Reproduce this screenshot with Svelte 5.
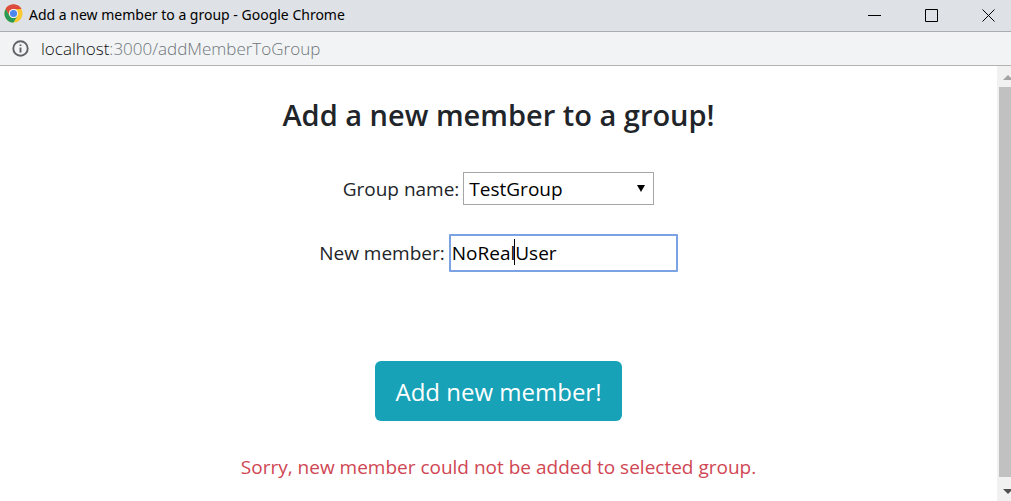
<script lang="ts">
  let group = $state('TestGroup');
  let member = $state('NoRealUser');
</script>

<div class="window">
  <header class="titlebar">
    <svg class="logo" width="19" height="19" viewBox="0 0 48 48" aria-hidden="true">
      <circle cx="24" cy="24" r="23" fill="#fbc934" />
      <path d="M4.1 12.5A23 23 0 0 1 43.9 12.5L24 13Z" fill="#dc4b3e" />
      <path d="M4.1 12.5A23 23 0 0 1 43.9 12.5H24A11.5 11.5 0 0 0 14 29.8Z" fill="#dc4b3e" />
      <path d="M4.1 12.5A23 23 0 0 0 24 47L34 29.8A11.5 11.5 0 0 1 14 29.8Z" fill="#279b57" />
      <circle cx="24" cy="24" r="11.5" fill="#f3f6fb" />
      <circle cx="24" cy="24" r="9" fill="#4a86ee" />
    </svg>
    <span class="title">Add a new member to a group - Google Chrome</span>
    <div class="controls">
      <button aria-label="Minimize">
        <svg width="13" height="13" viewBox="0 0 13 13"><path d="M0 6.5H13" /></svg>
      </button>
      <button aria-label="Maximize">
        <svg width="13" height="13" viewBox="0 0 13 13"><path d="M.5 .5H12.5V12.5H.5Z" /></svg>
      </button>
      <button aria-label="Close">
        <svg width="13" height="13" viewBox="0 0 13 13"><path d="M.5 .5L12.5 12.5M12.5 .5L.5 12.5" /></svg>
      </button>
    </div>
  </header>

  <div class="address">
    <svg width="17" height="17" viewBox="0 0 17 17" aria-hidden="true">
      <circle cx="8.5" cy="8.5" r="7.2" fill="none" stroke="#5f6368" stroke-width="1.9" />
      <path d="M8.5 7.5V12.5M8.5 4.4V6.1" stroke="#5f6368" stroke-width="1.9" />
    </svg>
    <span class="url"><span class="host">localhost</span>:3000/addMemberToGroup</span>
  </div>

  <div class="viewport">
    <main>
      <h1>Add a new member to a group!</h1>
      <form onsubmit={(e) => e.preventDefault()}>
        <div class="row group">
          <label for="group">Group name:</label>
          <span class="field">
            <select id="group" bind:value={group}>
              <option>TestGroup</option>
            </select>
            <svg class="arrow" width="8" height="7" viewBox="0 0 8 7" aria-hidden="true"><path d="M0 0H8L4 7Z" /></svg>
          </span>
        </div>
        <div class="row member">
          <label for="member">New member:</label>
          <span class="field">
            <input id="member" type="text" bind:value={member} />
            <span class="caret"></span>
          </span>
        </div>
        <button class="submit" type="submit">Add new member!</button>
      </form>
      <p class="error" role="alert">Sorry, new member could not be added to selected group.</p>
    </main>

    <div class="scrollbar" aria-hidden="true">
      <svg width="12" height="21" viewBox="0 0 12 21"><path d="M4 14L9 9L14 14Z" fill="#a3a3a3" /></svg>
      <div class="thumb"></div>
      <svg width="12" height="24" viewBox="0 0 12 24"><path d="M4 12H14L9 17Z" fill="#505050" /></svg>
    </div>
  </div>
</div>

<style>
  :global(body) {
    margin: 0;
    background: #fff;
  }

  .window {
    display: flex;
    flex-direction: column;
    height: 100vh;
    overflow: hidden;
    color: #212529;
    font-family: "Segoe UI", "Open Sans", "Noto Sans", sans-serif;
    font-size: 19px;
  }

  .window * {
    box-sizing: border-box;
  }

  .titlebar {
    display: flex;
    align-items: center;
    flex: none;
    height: 32px;
    padding-left: 4px;
    background: #dee1e6;
    border-bottom: 1px solid #a9acb0;
    color: #000;
    font-family: "Segoe UI", "Noto Sans", sans-serif;
    font-size: 14px;
  }

  .logo {
    margin: 0 6px 4px 0;
  }

  .title {
    padding-bottom: 2px;
  }

  .controls {
    display: flex;
    align-self: stretch;
    margin-left: auto;
    margin-right: -6px;
  }

  .controls button {
    display: flex;
    align-items: center;
    justify-content: center;
    width: 57px;
    padding: 0;
    border: 0;
    background: none;
  }

  .controls path {
    fill: none;
    stroke: #000;
  }

  .address {
    display: flex;
    align-items: center;
    flex: none;
    gap: 12px;
    height: 34px;
    padding-left: 12px;
    background: #f1f3f4;
    border-bottom: 1px solid #b0b2b3;
    font-size: 17px;
    font-weight: 300;
  }

  .url {
    color: #70767b;
  }

  .host {
    color: #101114;
  }

  .viewport {
    display: flex;
    flex: 1;
    min-height: 0;
  }

  main {
    flex: 1;
    padding-top: 29px;
    text-align: center;
  }

  h1 {
    margin: 0;
    font-size: 29px;
    font-weight: 600;
    line-height: 40px;
  }

  form {
    display: flex;
    flex-direction: column;
    align-items: center;
    padding-top: 37px;
  }

  .row {
    display: flex;
    align-items: center;
    gap: 4px;
  }

  .member {
    margin-top: 29px;
  }

  .field {
    position: relative;
    display: flex;
  }

  select,
  input {
    margin: 0;
    background: #fff;
    color: #000;
    font: inherit;
    outline: 0;
  }

  select {
    width: 191px;
    height: 33px;
    padding: 0 5px;
    border: 1px solid #a6a6a6;
    border-radius: 0;
    appearance: none;
  }

  .arrow {
    position: absolute;
    top: 13px;
    right: 9px;
    pointer-events: none;
  }

  input {
    width: 229px;
    height: 38px;
    padding: 0 1px;
    border: 2px solid #7ba2e2;
    border-radius: 1px;
  }

  .caret {
    position: absolute;
    top: 5px;
    left: 65px;
    width: 1px;
    height: 26px;
    background: #000;
  }

  .submit {
    height: 60px;
    margin-top: 89px;
    padding: 0 20px;
    border: 0;
    border-radius: 6px;
    background: #17a2b8;
    color: #fff;
    font: inherit;
    font-size: 24px;
  }

  .error {
    margin: 32px 0 0;
    color: #d04653;
    line-height: 28px;
  }

  .scrollbar {
    display: flex;
    flex-direction: column;
    width: 14px;
    padding-left: 2px;
    background: #f1f1f1;
  }

  .scrollbar svg {
    flex: none;
  }

  .thumb {
    flex: 1;
    background: #c1c1c1;
  }
</style>
